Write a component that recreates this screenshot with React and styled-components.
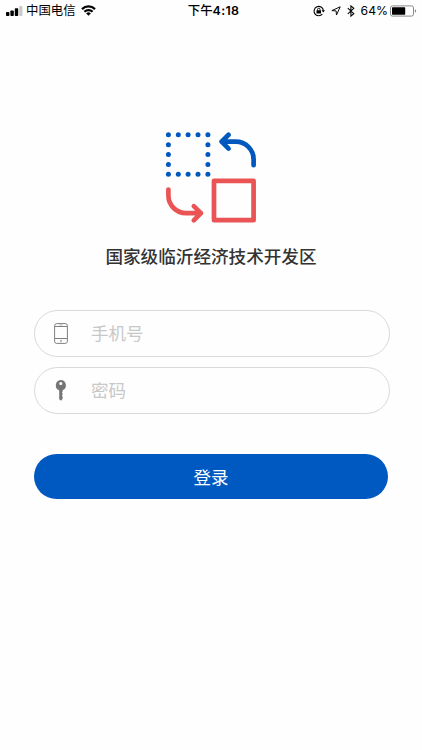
import { useState } from 'react';
import styled, { createGlobalStyle } from 'styled-components';

const dots = [8.4, 18.3, 28.1, 38, 47.9];

export default function LoginPage() {

    const [phone, setPhone] = useState('');
    const [password, setPassword] = useState('');

    function login(e) {
        e.preventDefault();
    }

    return (
        <>
            <GlobalStyle />
            <Screen>
                <StatusBar>
                    <Carrier>
                        <Signal />
                        <span>中国电信</span>
                        <Wifi />
                    </Carrier>
                    <Clock>下午<b>4:18</b></Clock>
                    <Indicators>
                        <RotationLock />
                        <Location />
                        <Bluetooth />
                        <Percent>64%</Percent>
                        <Battery />
                    </Indicators>
                </StatusBar>
                <Brand>
                    <Logo />
                    <h1>国家级临沂经济技术开发区</h1>
                </Brand>
                <Form onSubmit={login}>
                    <Field>
                        <PhoneIcon />
                        <input type="tel" placeholder="手机号" value={phone} onChange={(e) => setPhone(e.target.value)} />
                    </Field>
                    <Field>
                        <KeyIcon />
                        <input type="password" placeholder="密码" value={password} onChange={(e) => setPassword(e.target.value)} />
                    </Field>
                    <LoginBtn type="submit">登录</LoginBtn>
                </Form>
            </Screen>
        </>
    );
}

function Signal() {
    return (
        <svg width="17" height="10" viewBox="0 0 17 10">
            <rect x="0" y="6" width="3.4" height="4" rx="0.8" />
            <rect x="4.4" y="4.4" width="3.4" height="5.6" rx="0.8" />
            <rect x="8.8" y="2.3" width="3.4" height="7.7" rx="0.8" />
            <rect x="13.2" y="0" width="3.2" height="10" rx="0.8" fill="#c9c9c9" />
        </svg>
    );
}

function Wifi() {
    return (
        <svg width="15" height="11" viewBox="0 0 15 11" fill="none" stroke="#000" strokeWidth="2.2">
            <path d="M1 4.1a9.2 9.2 0 0 1 13 0" />
            <path d="M3.4 6.8a5.8 5.8 0 0 1 8.2 0" />
            <path d="M7.5 10.8 5.2 8.5a3.2 3.2 0 0 1 4.6 0z" fill="#000" stroke="none" />
        </svg>
    );
}

function RotationLock() {
    return (
        <svg width="12" height="12" viewBox="0 0 12 12" fill="none" stroke="#000">
            <path d="M9.3 9.2A4.7 4.7 0 1 1 10.4 5.4" strokeWidth="1.1" />
            <path d="M8.5 5.2h3.5l-1.7 2.4z" fill="#000" stroke="none" />
            <rect x="3.5" y="5.2" width="4.5" height="3.4" rx="0.4" fill="#000" stroke="none" />
            <path d="M4.5 5.4V4.5a1.25 1.25 0 0 1 2.5 0v0.9" strokeWidth="0.9" />
        </svg>
    );
}

function Location() {
    return (
        <svg width="10" height="10" viewBox="0 0 10 10" fill="none" stroke="#000" strokeWidth="0.95" strokeLinejoin="round">
            <path d="M9.2 0.8 5.5 9 5.1 4.9 0.9 4.6z" />
        </svg>
    );
}

function Bluetooth() {
    return (
        <svg width="8" height="12" viewBox="0 0 8 12" fill="none" stroke="#000" strokeWidth="1.1">
            <path d="M0.8 3.2 6.8 8.7 3.9 11.1V0.9L6.8 3.3 0.8 8.8" />
        </svg>
    );
}

function Battery() {
    return (
        <svg width="27" height="12" viewBox="0 0 27 12">
            <rect x="0.5" y="0.9" width="23" height="10.2" rx="2" fill="none" stroke="#8a8a8a" />
            <rect x="2" y="2.3" width="13.2" height="7.4" rx="0.6" />
            <path d="M24.9 4.3q1.3 0.5 1.3 1.7t-1.3 1.7z" fill="#8a8a8a" />
        </svg>
    );
}

function Logo() {
    return (
        <svg width="102" height="104" viewBox="0 0 102 104" fill="none" strokeWidth="4.7" strokeLinecap="round" strokeLinejoin="round">
            <g fill="#0058be">
                {dots.map((x, col) => dots.map((y, row) => (
                    (col % 4 === 0 || row % 4 === 0) && <circle key={`${x}-${y}`} cx={x} cy={y + 0.4} r="2.5" />
                )))}
            </g>
            <path d="M93.6 39.2V33.5A17.8 17.8 0 0 0 75.8 15.6H61.5M68.6 8.8 61.6 15.6 68.6 22.6" stroke="#0058be" />
            <path d="M8.4 63.6V69.5A17.8 17.8 0 0 0 26.2 87.2H41M33.8 80.2 40.9 87.2 33.8 94.3" stroke="#ea5454" />
            <rect x="54" y="54.8" width="39.6" height="39.4" stroke="#ea5454" />
        </svg>
    );
}

function PhoneIcon() {
    return (
        <svg width="14" height="21" viewBox="0 0 14 21" fill="none" stroke="#808080">
            <rect x="0.6" y="0.6" width="12.8" height="19.8" rx="2.2" />
            <path d="M0.6 3.5h12.8M0.6 15.5h12.8" />
            <path d="M5.5 2h3" strokeWidth="0.6" />
            <circle cx="7" cy="18" r="0.8" strokeWidth="0.6" />
        </svg>
    );
}

function KeyIcon() {
    return (
        <svg width="14" height="21" viewBox="0 0 14 21" fill="#757575">
            <path fillRule="evenodd" d="M6.5 0.1a5.3 5.3 0 0 1 2.1 10.2v1.5l-0.7 0.9 0.7 0.9v1.2l-0.7 0.8 0.7 0.9v2.2l-1.6 2-1.8-1.5V10.3A5.3 5.3 0 0 1 6.5 0.1zM6.8 1.9a1.6 1.6 0 1 0 0 3.2 1.6 1.6 0 0 0 0-3.2z" />
        </svg>
    );
}

const GlobalStyle = createGlobalStyle`
    * {
        box-sizing: border-box;
    }

    body {
        margin: 0;
        background-color: #fefefe;
        font-family: Inter, 'Noto Sans CJK SC', sans-serif;
    }
`;

const Screen = styled.div`
    min-height: 100vh;
    background-color: #fefefe;
`;

const StatusBar = styled.div`
    height: 22px;
    padding: 0 5px 0 6px;
    display: grid;
    grid-template-columns: 1fr auto 1fr;
    grid-template-rows: 21px;
    font-size: 12.4px;
    line-height: 20px;
    color: #000;
`;

const Carrier = styled.div`
    display: flex;
    align-items: center;

    span {
        padding-top: 1px;
        margin: 0 5px 0 3px;
    }
`;

const Clock = styled.div`
    padding: 1px 0 0 4px;
    font-weight: 500;

    b {
        font-weight: 600;
        letter-spacing: 0.3px;
    }
`;

const Indicators = styled.div`
    display: flex;
    align-items: center;
    justify-content: flex-end;
    gap: 6px;
`;

const Percent = styled.span`
    padding-top: 1px;
    margin-right: -4px;
    font-size: 12.2px;
`;

const Brand = styled.div`
    padding-top: 104px;
    display: flex;
    flex-direction: column;
    align-items: center;

    h1 {
        margin: 14px 0 0;
        font-size: 17.6px;
        line-height: 26px;
        font-weight: 500;
        color: #333;
    }
`;

const Form = styled.form`
    padding: 40px 32px 0 34px;
    display: flex;
    flex-direction: column;
    gap: 10px;
`;

const Field = styled.label`
    height: 47px;
    padding: 0 19px;
    display: flex;
    align-items: center;
    gap: 23px;
    border: 1px solid #d9d9d9;
    border-radius: 24px;

    input {
        flex: 1;
        min-width: 0;
        padding: 0;
        border: none;
        outline: none;
        background: transparent;
        font: inherit;
        font-size: 17.5px;
        color: #333;
    }

    input::placeholder {
        color: #c8c8c8;
    }
`;

const LoginBtn = styled.button`
    height: 45px;
    margin: 30px 2px 0 0;
    padding: 0 0 1px;
    border: none;
    border-radius: 23px;
    background-color: #0058c1;
    font: inherit;
    font-size: 17.5px;
    color: #fff;
    cursor: pointer;
`;
